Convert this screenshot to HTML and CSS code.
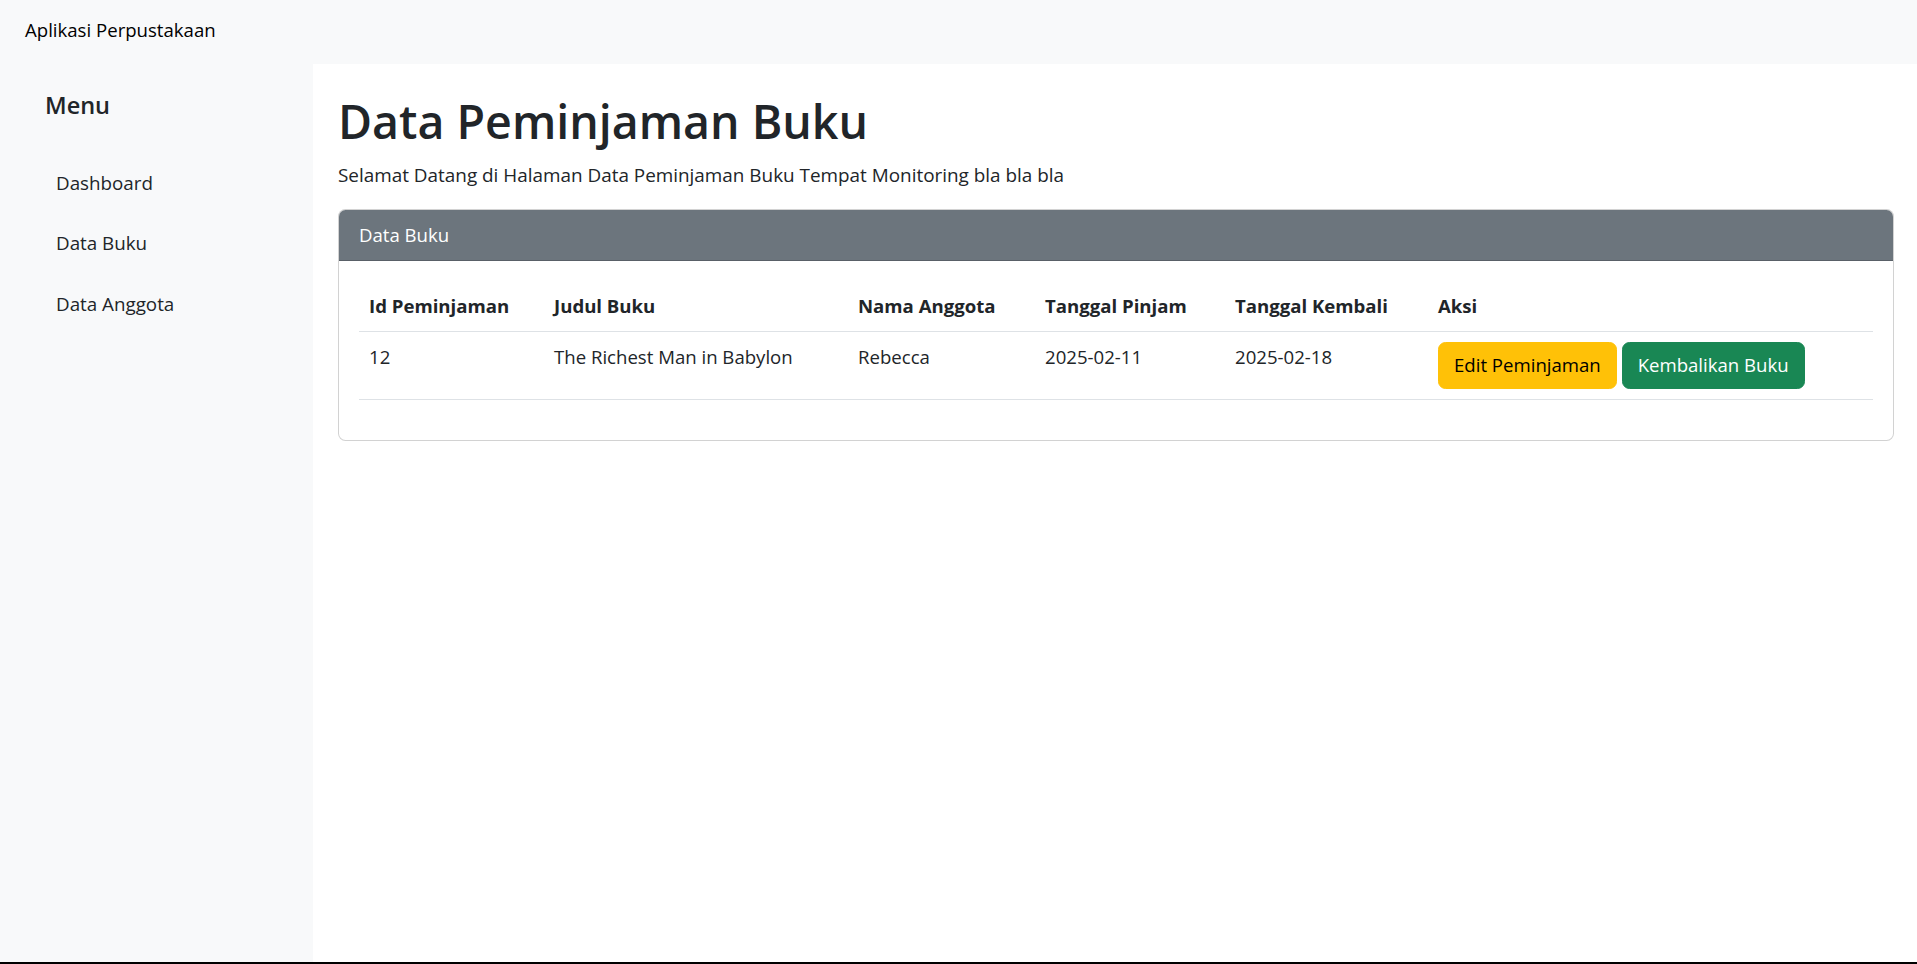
FILE: index.html
```html
<!DOCTYPE html>
<html lang="id">
<head>
<meta charset="utf-8">
<title>Aplikasi Perpustakaan</title>
<link rel="stylesheet" href="styles.css">
</head>
<body>
<div class="app">
  <nav class="topbar"><span class="brand">Aplikasi Perpustakaan</span></nav>
  <div class="layout">
    <aside class="sidebar">
      <h5 class="sidebar-title">Menu</h5>
      <ul class="side-nav">
        <li class="side-item"><a class="side-link" href="#">Dashboard</a></li>
        <li class="side-item"><a class="side-link" href="#">Data Buku</a></li>
        <li class="side-item"><a class="side-link" href="#">Data Anggota</a></li>
      </ul>
    </aside>
    <main class="content">
      <h1 class="page-title">Data Peminjaman Buku</h1>
      <p class="intro">Selamat Datang di Halaman Data Peminjaman Buku Tempat Monitoring bla bla bla</p>
      <section class="card">
        <div class="card-header">Data Buku</div>
        <div class="card-body">
          <table class="table">
            <colgroup>
              <col class="col-id">
              <col class="col-judul">
              <col class="col-nama">
              <col class="col-pinjam">
              <col class="col-kembali">
              <col class="col-aksi">
            </colgroup>
            <thead>
              <tr>
                <th>Id Peminjaman</th>
                <th>Judul Buku</th>
                <th>Nama Anggota</th>
                <th>Tanggal Pinjam</th>
                <th>Tanggal Kembali</th>
                <th>Aksi</th>
              </tr>
            </thead>
            <tbody>
              <tr>
                <td>12</td>
                <td>The Richest Man in Babylon</td>
                <td>Rebecca</td>
                <td>2025-02-11</td>
                <td>2025-02-18</td>
                <td><a class="btn btn-warning" href="#">Edit Peminjaman</a> <a class="btn btn-success" href="#">Kembalikan Buku</a></td>
              </tr>
            </tbody>
          </table>
        </div>
      </section>
    </main>
  </div>
  <div class="bottom-edge"></div>
</div>
</body>
</html>
```
FILE: styles.css
```css
* { box-sizing: border-box; }

html, body {
  margin: 0;
  padding: 0;
}

body {
  font-family: "Open Sans", "Noto Sans", sans-serif;
  font-size: 18.6px;
  line-height: 30px;
  color: #212529;
  background: #fff;
}

.app {
  display: flex;
  flex-direction: column;
  height: 100vh;
}

.topbar {
  flex: none;
  height: 64px;
  background: #f8f9fa;
  padding: 15px 0 0 25px;
}

.brand {
  font-size: 18.6px;
  line-height: 30px;
  color: #000;
}

.layout {
  flex: 1;
  display: flex;
  min-height: 0;
}

.sidebar {
  flex: none;
  width: 313px;
  background: #f8f9fa;
  padding-top: 26.5px;
}

.sidebar-title {
  margin: 0;
  padding-left: 45px;
  font-size: 23.5px;
  font-weight: 600;
  line-height: 28.8px;
  color: #212529;
}

.side-nav {
  list-style: none;
  margin: 38.5px 0 0;
  padding: 0 0 0 36px;
}

.side-item {
  margin-bottom: 10.5px;
}

.side-link {
  display: block;
  padding: 10px 20px;
  font-size: 18.8px;
  line-height: 30px;
  color: #212529;
  text-decoration: none;
}

.content {
  flex: 1;
  background: #fff;
  padding: 30px 23px 0 25px;
}

.page-title {
  margin: 0 0 10px;
  font-size: 46.5px;
  font-weight: 600;
  line-height: 1.2;
  color: #212529;
}

.intro {
  margin: 0 0 19px;
  font-size: 18.9px;
  line-height: 30px;
}

.card {
  border: 1px solid rgba(0, 0, 0, 0.175);
  border-radius: 7.5px;
  overflow: hidden;
  background: #fff;
}

.card-header {
  background: #6c757d;
  color: #fff;
  padding: 10px 20px;
  line-height: 30px;
  border-bottom: 1px solid rgba(0, 0, 0, 0.175);
}

.card-body {
  padding: 20px;
}

.table {
  width: 100%;
  border-collapse: collapse;
  table-layout: fixed;
  margin-bottom: 20px;
  vertical-align: top;
}

.col-id { width: 185px; }
.col-judul { width: 304px; }
.col-nama { width: 187px; }
.col-pinjam { width: 190px; }
.col-kembali { width: 203px; }

.table th,
.table td {
  padding: 10px;
  text-align: left;
  vertical-align: top;
  line-height: 30px;
  border-bottom: 1px solid #dee2e6;
  white-space: nowrap;
}

.table th {
  font-weight: 700;
}

.btn {
  display: inline-block;
  padding: 7.5px 15px;
  border: 1px solid transparent;
  border-radius: 7.5px;
  font-size: 18.6px;
  line-height: 30px;
  text-decoration: none;
  vertical-align: top;
}

.btn-warning {
  background: #ffc107;
  border-color: #ffc107;
  color: #000;
}

.btn-success {
  background: #198754;
  border-color: #198754;
  color: #fff;
}

.bottom-edge {
  flex: none;
  height: 2px;
  background: #000;
}
```
